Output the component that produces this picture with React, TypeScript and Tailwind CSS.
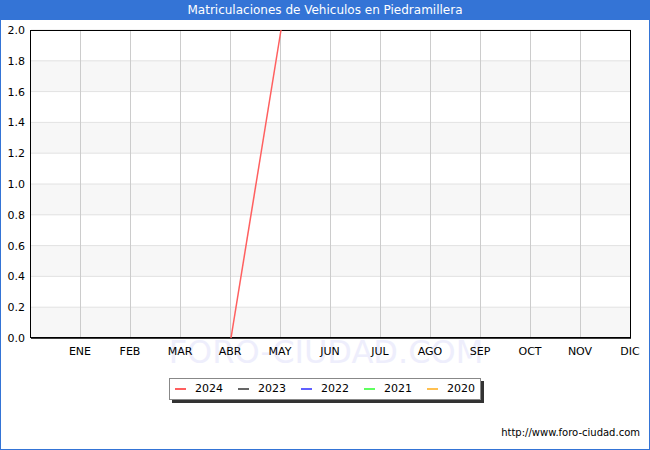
export default function App() {
  const months = ["ENE", "FEB", "MAR", "ABR", "MAY", "JUN", "JUL", "AGO", "SEP", "OCT", "NOV", "DIC"];
  const ticks = ["2.0", "1.8", "1.6", "1.4", "1.2", "1.0", "0.8", "0.6", "0.4", "0.2", "0.0"];
  const top = 30;
  const bottom = 338;
  const step = (bottom - top) / 10;
  const legend = [
    { y: "2024", c: "#ff5f5f" },
    { y: "2023", c: "#666666" },
    { y: "2022", c: "#6060ff" },
    { y: "2021", c: "#60ff60" },
    { y: "2020", c: "#ffc050" },
  ];
  return (
    <div className="w-[650px] h-[450px] bg-white border border-t-0 border-[#3474d6] flex flex-col" style={{ fontFamily: "'DejaVu Sans', sans-serif" }}>
      <div className="h-[20px] bg-[#3474d6] text-white text-[12px] flex items-center justify-center">
        Matriculaciones de Vehiculos en Piedramillera
      </div>
      <svg width="648" height="345" className="block" style={{ fontFamily: "'DejaVu Sans', sans-serif" }}>
        {ticks.map((_, i) =>
          i % 2 === 1 ? <rect key={i} x={30} y={top - 20 + i * step} width={600} height={step} fill="#f7f7f7" /> : null
        )}
        {ticks.map((_, i) => (
          <line key={i} x1={30} x2={630} y1={top - 20 + i * step} y2={top - 20 + i * step} stroke="#e2e2e2" />
        ))}
        {months.map((_, i) => (
          <line key={i} x1={79.5 + i * 50} x2={79.5 + i * 50} y1={10} y2={318} stroke="#cccccc" />
        ))}
        <text x={325} y={343} textAnchor="middle" fontSize={32} fill="#eeeefc">FORO-CIUDAD.COM</text>
        <rect x={29.5} y={10.5} width={600} height={307} fill="none" stroke="#000" />
        <line x1={30} x2={630} y1={318} y2={318} stroke="#000" strokeWidth={1.5} />
        <line x1={230} y1={318} x2={280} y2={10} stroke="#ff5f5f" strokeWidth={1.5} />
        {ticks.map((t, i) => (
          <text key={t} x={24} y={top - 20 + i * step + 4} textAnchor="end" fontSize={11} fill="#000">{t}</text>
        ))}
        {months.map((m, i) => (
          <text key={m} x={79 + i * 50} y={335} textAnchor="middle" fontSize={11} fill="#000">{m}</text>
        ))}
      </svg>
      <div className="flex justify-center mt-[13px]">
        <div className="relative">
          <div className="absolute left-[3px] top-[3px] w-full h-full bg-[#333]" />
          <div className="relative flex items-center gap-[15px] border border-[#888] bg-white h-[22px] px-[5px] text-[11px]">
            {legend.map((l) => (
              <div key={l.y} className="flex items-center gap-[9px]">
                <span className="w-[11px] h-[2px]" style={{ background: l.c }} />
                <span>{l.y}</span>
              </div>
            ))}
          </div>
        </div>
      </div>
      <div className="flex-1" />
      <div className="text-[10px] text-right pr-[9px] pb-[9px]">http://www.foro-ciudad.com</div>
    </div>
  );
}
